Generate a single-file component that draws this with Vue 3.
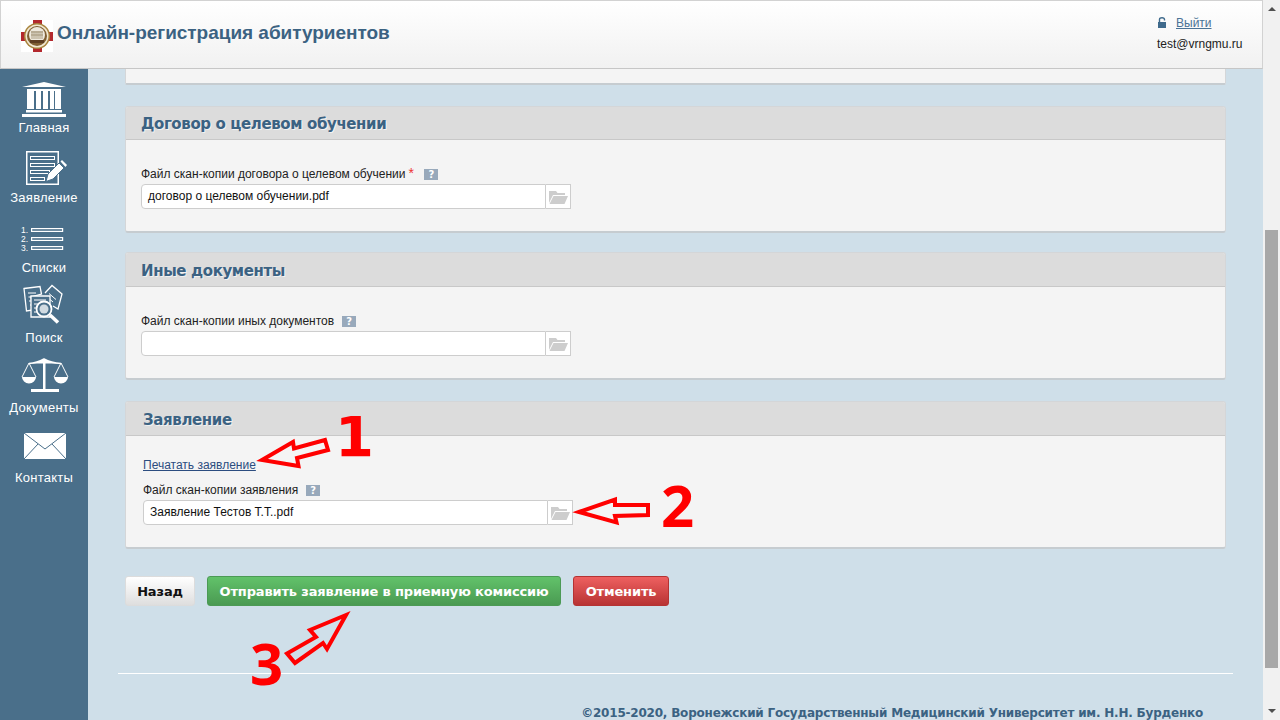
<script setup>
const navItems = ['Главная', 'Заявление', 'Списки', 'Поиск', 'Документы', 'Контакты']
</script>

<template>
  <div class="page">
    <div class="viewport">
      <header class="topbar">
        <div class="brand">
          <svg class="logo" viewBox="0 0 32 32" width="32" height="32">
            <rect width="32" height="32" fill="#fff" />
            <rect x="12" y="0" width="9" height="4" fill="#b3282d" />
            <rect x="12" y="28" width="9" height="4" fill="#b3282d" />
            <rect x="0" y="12" width="4" height="9" fill="#b3282d" />
            <rect x="28" y="12" width="4" height="9" fill="#b3282d" />
            <circle cx="16" cy="16" r="13" fill="#a8843e" />
            <circle cx="16" cy="16" r="11.500" fill="#f1e8d2" />
            <circle cx="16" cy="16" r="10" fill="#7f5f34" />
            <circle cx="16" cy="15" r="8" fill="#eee9dd" />
            <path d="M10 12h12M10 15h12M11 11v8M13 11v8M15 11v8M17 11v8M19 11v8M21 11v8" stroke="#9b8a6c" stroke-width=".8" />
            <path d="M9 20h14v3H9z" fill="#5d3d22" />
          </svg>
          <span class="brand-title">Онлайн-регистрация абитуриентов</span>
        </div>
        <div class="account">
          <div class="logout">
            <svg class="lock" viewBox="0 0 8 11" width="8" height="11">
              <path d="M0 5h8v6H0z" fill="#3f6a8c" />
              <path d="M1.500 5V2.600C1.500 1.300 2.500.7 4 .7s2.500.6 2.500 1.900V3.500" fill="none" stroke="#3f6a8c" stroke-width="1.400" />
            </svg>
            <a class="logout-link">Выйти</a>
          </div>
          <div class="email">test@vrngmu.ru</div>
        </div>
      </header>

      <div class="body">
        <nav class="sidebar">
          <div v-for="(item, i) in navItems" :key="item" class="nav-item">
            <svg class="nav-icon" viewBox="0 0 88 39" width="88" height="39">
              <g v-if="i === 0" fill="#fff">
                <path d="M22 7 44 2l22 5z" />
                <path d="M27 9h34v2H27zM27 11h7v18h-7zM36 11h5v18h-5zM43 11h5v18h-5zM50 11h4v18h-4zM55 11h6v18h-6z" />
                <path d="M26 30h36v2.500H26zM22 34h44v3H22z" />
              </g>
              <g v-else-if="i === 1">
                <rect x="26.750" y="1.750" width="31.500" height="32.500" fill="none" stroke="#fff" stroke-width="1.500" />
                <g fill="none" stroke="#fff">
                  <rect x="30.500" y="6.500" width="24" height="3" />
                  <rect x="30.500" y="13.500" width="24" height="3" />
                  <rect x="30.500" y="20.500" width="19" height="3" />
                  <rect x="30.500" y="27.500" width="14" height="3" />
                </g>
                <path d="M46 31.500 48 24 59 13l5 5-11 11z" fill="#fff" stroke="#4a6f8a" />
                <path d="M60.500 11.500 62 10l5 5-1.500 2z" fill="#fff" />
              </g>
              <g v-else-if="i === 2">
                <g fill="none" stroke="#fff" stroke-width="1.200">
                  <rect x="31.600" y="8.600" width="31" height="2.800" />
                  <rect x="31.600" y="17.600" width="31" height="2.800" />
                  <rect x="31.600" y="26.600" width="31" height="2.800" />
                </g>
                <g fill="#fff" font-family="Liberation Sans, sans-serif" font-size="8.500">
                  <text x="21" y="12.500">1.</text>
                  <text x="21" y="21.500">2.</text>
                  <text x="21" y="30.500">3.</text>
                </g>
              </g>
              <g v-else-if="i === 3" fill="none" stroke="#fff" stroke-width="1.300">
                <path d="M24 -1.500 40 -3.500 41.500 4 31 7 33 20 26.500 21z" />
                <path d="M28 3h8M28.500 7h3M29 11h2M30 15h1" stroke-width="1" />
                <path d="M45 3 52 -4.500 62 4 58 19l-5-3" />
                <path d="M46.500 6.500 53 12M49 3.500 56 9.500" stroke-width="1" />
                <path d="M31 6h19v21H31z" fill="#4a6f8a" />
                <path d="M34 10h12M34 14h4M34 18h3M34 22h3" stroke-width="1" />
                <circle cx="44" cy="19" r="7.500" fill="#4a6f8a" stroke-width="1.800" />
                <circle cx="44" cy="19" r="4.500" fill="#fff" stroke="none" opacity=".75" />
                <path d="M50 25 58 32.500" stroke-width="3.500" />
              </g>
              <g v-else-if="i === 4">
                <path d="M29 3.500Q37 3 44 -1Q51 3 61 3.500" fill="#fff" stroke="#fff" stroke-width="1.500" />
                <rect x="43" y="0" width="2.500" height="29" fill="#fff" />
                <rect x="31" y="29" width="28" height="3" fill="#fff" />
                <path d="M29 3 22 17M29 3 36 17M61 3 54 17M61 3 68 17" stroke="#fff" fill="none" stroke-width="1" />
                <path d="M22 17h14a7 6.500 0 0 1-14 0zM54 17h14a7 6.500 0 0 1-14 0z" fill="#fff" />
              </g>
              <g v-else>
                <rect x="24" y="3" width="42" height="26" fill="#fff" />
                <path d="M24 3 45 19 66 3M24 29 38 14M66 29 52 14" fill="none" stroke="#4a6f8a" stroke-width="1" />
              </g>
            </svg>
            <span class="nav-label">{{ item }}</span>
          </div>
        </nav>

        <main class="main">
          <div class="card card-cut"></div>

          <section class="card contract">
            <h2 class="card-head">Договор о целевом обучении</h2>
            <div class="card-body">
              <div class="label">Файл скан-копии договора о целевом обучении<span class="req">*</span><span class="help">?</span></div>
              <div class="file">
                <div class="file-name">договор о целевом обучении.pdf</div>
                <div class="file-btn">
                  <svg viewBox="0 0 20 14" width="20" height="14"><path d="M1 1h7l1.500 2H17v2H5L1 13zM5.500 6H20l-3.500 8H1.500z" fill="#cdcdcd" /></svg>
                </div>
              </div>
            </div>
          </section>

          <section class="card other">
            <h2 class="card-head tall">Иные документы</h2>
            <div class="card-body">
              <div class="label">Файл скан-копии иных документов<span class="help spaced">?</span></div>
              <div class="file">
                <div class="file-name"></div>
                <div class="file-btn">
                  <svg viewBox="0 0 20 14" width="20" height="14"><path d="M1 1h7l1.500 2H17v2H5L1 13zM5.500 6H20l-3.500 8H1.500z" fill="#cdcdcd" /></svg>
                </div>
              </div>
            </div>
          </section>

          <section class="card statement">
            <h2 class="card-head tall inset">Заявление</h2>
            <div class="card-body inset-body">
              <a class="print-link">Печатать заявление</a>
              <div class="label label-statement">Файл скан-копии заявления<span class="help spaced">?</span></div>
              <div class="file">
                <div class="file-name">Заявление Тестов Т.Т..pdf</div>
                <div class="file-btn">
                  <svg viewBox="0 0 20 14" width="20" height="14"><path d="M1 1h7l1.500 2H17v2H5L1 13zM5.500 6H20l-3.500 8H1.500z" fill="#cdcdcd" /></svg>
                </div>
              </div>
            </div>
          </section>

          <div class="actions">
            <button class="btn btn-back">Назад</button>
            <button class="btn btn-send">Отправить заявление в приемную комиссию</button>
            <button class="btn btn-cancel">Отменить</button>
          </div>

          <hr class="rule" />
          <footer class="footer">©2015-2020, Воронежский Государственный Медицинский Университет им. Н.Н. Бурденко</footer>
        </main>
      </div>
    </div>

    <aside class="scrollbar">
      <span class="arrow arrow-up"></span>
      <span class="thumb"></span>
      <span class="arrow arrow-down"></span>
    </aside>

    <svg class="marks" viewBox="0 0 1280 720" width="1280" height="720">
      <g fill="none" stroke="#f00" stroke-width="4">
        <path d="M262 460 293 442 294 448.500 325 440 328 450 297 458 298.500 466z" />
        <path d="M579 512 615 499.500 615 505 648 505 648 515 615 516 616.500 522.500z" />
        <path d="M346 615 310 630 316 637 287 653.500 295 663 323 643 327 649z" />
      </g>
    </svg>
    <span class="mark-num num-1">1</span>
    <span class="mark-num num-2">2</span>
    <span class="mark-num num-3">3</span>
  </div>
</template>

<style>
html, body { margin: 0; background: #cfdfe9; overflow: hidden; }
</style>

<style scoped>
.page {
  position: relative;
  display: flex;
  width: 1280px;
  height: 720px;
  overflow: hidden;
  background: #cfdfe9;
  font-family: "Liberation Sans", sans-serif;
  color: #111;
}
.viewport {
  display: flex;
  flex-direction: column;
  flex: 1;
  min-width: 0;
}
.topbar {
  position: relative;
  z-index: 2;
  display: flex;
  align-items: flex-start;
  justify-content: space-between;
  box-sizing: border-box;
  height: 69px;
  flex: none;
  border: 1px solid #d2d2d2;
  border-bottom: 1px solid #c6c6c6;
  background: linear-gradient(#fff, #f1f1f1);
}
.brand {
  display: flex;
  align-items: center;
  gap: 4px;
  margin: 19px 0 0 20px;
}
.logo { display: block; }
.brand-title {
  margin-top: -6px;
  font: bold 19px "Liberation Sans", sans-serif;
  letter-spacing: -0.03px;
  color: #3b6282;
}
.account {
  width: 104px;
  padding-top: 14px;
  font-size: 12px;
}
.logout { display: flex; align-items: center; gap: 10px; height: 16px; }
.lock { display: block; margin-top: -1px; }
.logout-link {
  color: #4a7396;
  text-decoration: underline;
}
.email { margin: 6px 0 0 -1px; white-space: nowrap; color: #222; }
.body {
  display: flex;
  flex: 1;
  min-height: 0;
}
.sidebar {
  flex: none;
  width: 88px;
  padding-top: 11px;
  background: #4a6f8a;
}
.nav-item {
  display: flex;
  flex-direction: column;
  align-items: center;
  height: 70px;
}
.nav-icon { display: block; flex: none; overflow: visible; }
.nav-label {
  margin-top: 1px;
  font: 13px/16px "Liberation Sans", sans-serif;
  letter-spacing: 0.25px;
  color: #fff;
}
.main {
  flex: 1;
  min-width: 0;
  padding: 0 37px;
}
.card {
  box-sizing: border-box;
  border: 1px solid #d4d6d8;
  border-bottom: 2px solid #c6ccd0;
  border-radius: 3px;
  background: #f4f4f4;
}
.card-cut {
  height: 16px;
  border-top: 0;
  border-radius: 0 0 2px 2px;
}
.contract { height: 127px; margin-top: 21px; }
.other { height: 128px; margin-top: 19px; }
.statement { height: 148px; margin-top: 21px; }
.card-head {
  box-sizing: border-box;
  height: 33px;
  margin: 0;
  padding: 0 15px;
  border-bottom: 1px solid #c8c8c8;
  border-radius: 2px 2px 0 0;
  background: #dcdcdc;
  font: bold 15px/34px "DejaVu Sans", sans-serif;
  letter-spacing: -0.38px;
  text-shadow: 1px 1px 0 #f2f2f2;
  color: #3b6282;
}
.card-head.tall { height: 34px; line-height: 36px; }
.card-head.inset { padding-left: 17px; }
.card-body { padding: 26px 15px 0; }
.inset-body { padding: 21px 17px 0; }
.label {
  display: flex;
  align-items: center;
  height: 16px;
  margin-bottom: 2px;
  font-size: 12px;
  line-height: 16px;
  color: #222;
}
.label-statement { margin-top: 9px; margin-bottom: 2px; }
.req { margin: -3px 0 0 3px; font-size: 14px; color: #e33; }
.help {
  display: inline-block;
  width: 14px;
  height: 11px;
  margin-left: 10.500px;
  background: #98a9bb;
  color: #fff;
  font: bold 10px/11px "DejaVu Sans", sans-serif;
  text-align: center;
}
.help.spaced { margin-left: 8px; }
.file {
  display: flex;
  width: 430px;
  height: 25px;
}
.file-name {
  box-sizing: border-box;
  flex: 1;
  padding: 0 6px;
  border: 1px solid #cdcdcd;
  border-radius: 4px 0 0 4px;
  background: #fff;
  font-size: 12px;
  line-height: 23px;
  color: #111;
}
.file-btn {
  display: flex;
  align-items: center;
  justify-content: center;
  box-sizing: border-box;
  flex: none;
  width: 25px;
  border: 1px solid #cdcdcd;
  border-left: 0;
  background: #fff;
}
.print-link {
  display: block;
  height: 16px;
  font-size: 12px;
  line-height: 16px;
  color: #2c4d80;
  text-decoration: underline;
}
.actions {
  display: flex;
  align-items: center;
  gap: 12px;
  margin-top: 27px;
}
.btn {
  box-sizing: border-box;
  height: 30px;
  padding: 0;
  border: 1px solid transparent;
  border-radius: 3px;
  font: bold 13px "DejaVu Sans", sans-serif;
  letter-spacing: -0.15px;
  cursor: pointer;
}
.btn-back {
  width: 70px;
  border-color: #dcdcdc;
  background: linear-gradient(#fff, #dedede);
  color: #111;
}
.btn-send {
  width: 354px;
  border-color: #4c9a55;
  background: linear-gradient(#62c26a, #4a9a52);
  color: #fff;
}
.btn-cancel {
  width: 96px;
  border-color: #b43333;
  background: linear-gradient(#ee6060, #b83333);
  color: #fff;
}
.rule {
  height: 1px;
  margin: 67px -7px 0;
  border: 0;
  background: #fff;
}
.footer {
  margin-top: 32px;
  padding-right: 23px;
  font: bold 12px "DejaVu Sans", sans-serif;
  letter-spacing: -0.21px;
  text-align: right;
  white-space: nowrap;
  color: #3b6282;
}
.scrollbar {
  position: relative;
  flex: none;
  width: 17px;
  background: #f1f1f1;
}
.thumb {
  position: absolute;
  left: 2px;
  top: 230px;
  width: 13px;
  height: 438px;
  background: #a8a8a8;
}
.arrow {
  position: absolute;
  left: 5px;
  width: 0;
  height: 0;
  border-left: 4px solid transparent;
  border-right: 4px solid transparent;
}
.arrow-up { top: 7px; border-bottom: 4px solid #505050; }
.arrow-down { bottom: 7px; border-top: 4px solid #505050; }
.marks {
  position: absolute;
  left: 0;
  top: 0;
  z-index: 3;
  pointer-events: none;
}
.mark-num {
  position: absolute;
  z-index: 3;
  font: bold 58px/60px "Open Sans", sans-serif;
  color: #f00;
}
.num-1 { left: 335px; top: 407px; font-family: "DejaVu Sans", sans-serif; font-size: 56px; }
.num-2 { left: 661px; top: 475px; }
.num-3 { left: 250px; top: 633px; }
</style>
